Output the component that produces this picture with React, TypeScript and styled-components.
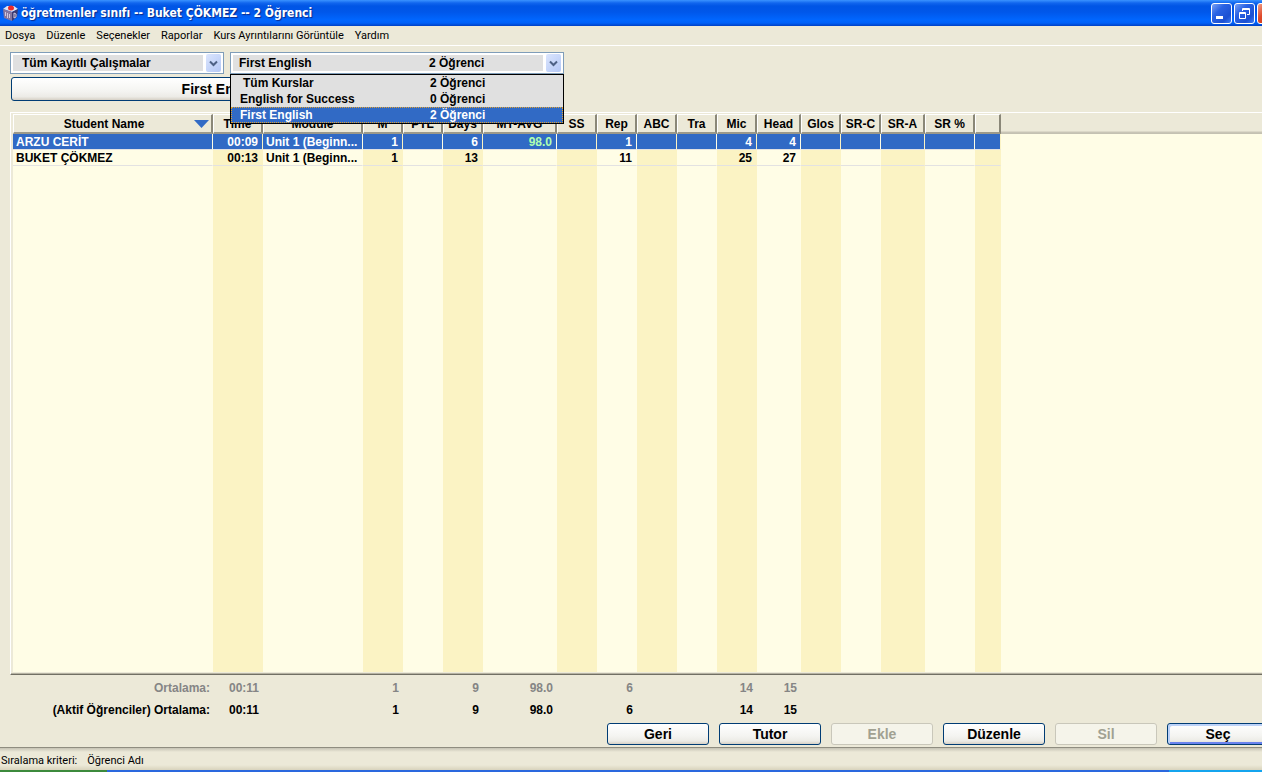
import React from 'react';
import styled, { createGlobalStyle, css } from 'styled-components';

const ui = '"Liberation Sans", Arial, sans-serif';
const menuFont = 'Roboto, Tahoma, sans-serif';

const GlobalStyle = createGlobalStyle`
  *, *::before, *::after { box-sizing: border-box; }
  body { margin: 0; background: #ece9d8; color: #000; font: bold 12px/16px ${ui}; }
`;

const Desktop = styled.div`
  display: flex;
  flex-direction: column;
  min-height: 100vh;
  overflow: hidden;
`;

/* The window is maximised on a desktop that is a little wider than the view. */
const Window = styled.div`
  flex: 1;
  display: flex;
  flex-direction: column;
  width: calc(100% + 18px);
  background: #ece9d8;
`;

const TitleBar = styled.header`
  display: flex;
  align-items: center;
  height: 26px;
  padding: 0 2px 0 2px;
  gap: 3px;
  background: linear-gradient(#3a93ff 0, #1166ee 3px, #0055e5 6px, #0057ea 12px, #0066ff 20px, #0061f8 23px, #0040c4 26px);
`;

const Title = styled.h1`
  flex: 1;
  margin: 0;
  font: bold 12px/20px "DejaVu Sans Condensed", "Trebuchet MS", sans-serif;
  color: #fff;
  text-shadow: 1px 1px 1px #0a2a8a;
  white-space: nowrap;
`;

const CaptionButton = styled.button<{ $close?: boolean }>`
  width: 21px;
  height: 21px;
  margin-left: -1px;
  padding: 0;
  border: 1px solid #fff;
  border-radius: 3px;
  background: ${p => p.$close
    ? 'linear-gradient(135deg, #f0a088, #e0492a 40%, #c33a14)'
    : 'linear-gradient(135deg, #7ba2f4, #2a63e4 35%, #1b50d2 75%, #3d7cf4)'};
  svg { display: block; }
`;

const MenuBar = styled.nav`
  display: flex;
  align-items: center;
  height: 20px;
  padding: 0 5px;
  gap: 11px;
  border-bottom: 1px solid #fff;
`;

const MenuItem = styled.button`
  padding: 0;
  border: 0;
  background: none;
  font: 11px/16px ${menuFont};
  color: #000;
  white-space: nowrap;
`;

const Content = styled.main`
  flex: 1;
  display: flex;
  flex-direction: column;
  padding: 6px 0 0 10px;
`;

const Filters = styled.div`
  display: flex;
  gap: 6px;
`;

const Combo = styled.div<{ $width: number }>`
  position: relative;
  display: flex;
  width: ${p => p.$width}px;
  height: 22px;
  padding: 2px;
  border: 1px solid #7f9db9;
  background: #fff;
`;

const Select = styled.select<{ $indent: number }>`
  flex: 1;
  min-width: 0;
  appearance: none;
  margin-right: 3px;
  padding: 0 0 0 ${p => p.$indent}px;
  border: 0;
  border-radius: 0;
  background: #e0e0e0;
  font: bold 12px/16px ${ui};
  color: #000;
`;

const Arrow = styled.span`
  display: flex;
  align-items: center;
  justify-content: center;
  width: 15px;
  height: 18px;
  margin-top: -1px;
  border-radius: 2px;
  background: linear-gradient(135deg, #dbe5fd, #b4c8f6);
  pointer-events: none;
`;

const Count = styled.span`
  position: absolute;
  left: 198px;
  top: 2px;
  pointer-events: none;
`;

const Popup = styled.ul`
  position: absolute;
  z-index: 2;
  left: -1px;
  right: -1px;
  top: 21px;
  margin: 0;
  padding: 0;
  list-style: none;
  border: 1px solid #000;
  background: #e0e0e0;
`;

const Option = styled.li<{ $active?: boolean; $indent: number }>`
  display: grid;
  grid-template-columns: 190px 1fr;
  height: 16px;
  padding-left: 9px;
  ${p => p.$active && css`
    background: #316ac5;
    color: #fff;
    outline: 1px dotted #e0a030;
    outline-offset: -1px;
  `}
  span:first-child { padding-left: ${p => p.$indent}px; }
`;

const Button = styled.button<{ $wide?: boolean; $default?: boolean }>`
  width: ${p => (p.$wide ? 426 : 102)}px;
  height: ${p => (p.$wide ? 24 : 22)}px;
  padding: 0;
  border: 1px solid #003c74;
  border-radius: 3px;
  background: linear-gradient(#fff, #f4f4f1 60%, #ecebe6 85%, #d6d0c5);
  font: bold 14px/18px ${ui};
  color: #000;
  ${p => p.$default && css`
    box-shadow: inset 2px 2px 0 #bcd2f8, inset -2px -2px 0 #6982ee;
  `}
  &:disabled {
    border-color: #c9c7ba;
    background: #f5f4ea;
    color: #a1a192;
  }
`;

const CourseButton = styled(Button)`
  margin: 3px 0 0 1px;
`;

const Frame = styled.section`
  flex: 1;
  display: flex;
  flex-direction: column;
  margin-top: 11px;
  padding: 1px 0 2px 2px;
  border: solid #fff;
  border-width: 1px 0 0 1px;
  border-bottom: 1px solid #716f64;
  box-shadow: inset 0 -1px 0 #b5b2a2;
`;

const Sheet = styled.div<{ $stripes: string }>`
  flex: 1;
  background:
    linear-gradient(#ece9d8 17px, #cbc7b8 18px, #c2bfb0) 0 0 / 100% 20px no-repeat,
    ${p => p.$stripes};
`;

const Table = styled.table<{ $width: number }>`
  width: ${p => p.$width}px;
  table-layout: fixed;
  border-collapse: separate;
  border-spacing: 0;
`;

const HeadCell = styled.th`
  height: 20px;
  padding: 2px 0 0;
  line-height: 15px;
  white-space: nowrap;
  text-align: center;
  background: #ece9d8;
  border: solid;
  border-width: 1px 2px 2px 1px;
  border-color: #fff #8a8778 #9c998a #fff;
  svg { float: right; margin: 3px 2px 0 0; }
`;

const Row = styled.tr<{ $selected?: boolean }>`
  td {
    height: 16px;
    padding: 1px 4px 0 3px;
    line-height: 14px;
    border-right: 1px solid transparent;
    border-bottom: 1px solid #e3e2e2;
    background-clip: padding-box;
    white-space: nowrap;
    ${p => p.$selected && css`
      background-color: #316ac5;
      color: #fff;
    `}
  }
`;

const Cell = styled.td<{ $left?: boolean; $green?: boolean }>`
  text-align: ${p => (p.$left ? 'left' : 'right')};
  ${p => p.$green && css`&& { color: #b0ffb0; }`}
`;

const Averages = styled(Table)`
  margin: 2px 0 0 3px;
  td, th {
    height: 22px;
    padding: 0 4px 0 0;
    text-align: right;
    white-space: nowrap;
  }
  th { padding-right: 3px; }
`;

const AverageRow = styled.tr<{ $muted?: boolean }>`
  color: ${p => (p.$muted ? '#858585' : '#000')};
`;

const Actions = styled.div`
  display: flex;
  justify-content: flex-end;
  gap: 10px;
  padding: 2px 11px 2px 0;
`;

const StatusBar = styled.footer`
  display: flex;
  align-items: center;
  height: 23px;
  padding: 3px 1px 0;
  gap: 10px;
  font: 11px/16px ${menuFont};
  border-top: 1px solid #8f8d80;
  background: linear-gradient(#c6c3b4, #ece9d8 4px, #ece9d8 17px, #d8d3bc);
`;

const TaskBar = styled.div`
  display: grid;
  grid-template-columns: 107px 1fr 93px;
  height: 2px;
`;

const TaskPart = styled.div<{ $color: string }>`
  background: ${p => p.$color};
`;

const columns: { label: string; width: number }[] = [
  { label: 'Student Name', width: 200 },
  { label: 'Time', width: 50 },
  { label: 'Module', width: 100 },
  { label: 'M', width: 40 },
  { label: 'PTL', width: 40 },
  { label: 'Days', width: 40 },
  { label: 'MT-AVG', width: 74 },
  { label: 'SS', width: 40 },
  { label: 'Rep', width: 40 },
  { label: 'ABC', width: 40 },
  { label: 'Tra', width: 40 },
  { label: 'Mic', width: 40 },
  { label: 'Head', width: 44 },
  { label: 'Glos', width: 40 },
  { label: 'SR-C', width: 40 },
  { label: 'SR-A', width: 44 },
  { label: 'SR %', width: 50 },
  { label: '', width: 26 },
];

const tableWidth = columns.reduce((sum, c) => sum + c.width, 0);

let edge = 0;
const stops = columns.map((c, i) => {
  const from = edge;
  edge += c.width;
  return `${i % 2 ? '#fbf3c4' : '#fffde6'} ${from}px ${edge}px`;
});
const stripes = `linear-gradient(90deg, ${stops.join(', ')}, #fffde6 ${edge}px)`;

const students = [
  ['ARZU CERİT', '00:09', 'Unit 1 (Beginn...', '1', '', '6', '98.0', '', '1', '', '', '4', '4', '', '', '', '', ''],
  ['BUKET ÇÖKMEZ', '00:13', 'Unit 1 (Beginn...', '1', '', '13', '', '', '11', '', '', '25', '27', '', '', '', '', ''],
];

const averages = ['00:11', '', '1', '', '9', '98.0', '', '6', '', '', '14', '15', '', '', '', '', ''];

const courses = [
  { name: 'Tüm Kurslar', count: '2 Öğrenci', indent: 3 },
  { name: 'English for Success', count: '0 Öğrenci', indent: 0 },
  { name: 'First English', count: '2 Öğrenci', indent: 0 },
];

const Columns = () => (
  <colgroup>
    {columns.map((c, i) => <col key={i} style={{ width: c.width }} />)}
  </colgroup>
);

const AppIcon = () => (
  <svg width="16" height="18" viewBox="0 0 16 18" aria-hidden="true">
    <path d="M1 5 5 2h7l4 3-6 3z" fill="#dfe3f2" />
    <path d="M1 5l9 3v9l-8-3z" fill="#85769f" />
    <path d="M16 5l-6 3v9l5-4z" fill="#3b3a72" />
    <path d="M3.500 8v4M5.500 9v5M7.500 10v4M12 14V9l2 1v3l-2 1" stroke="#cfc8e0" fill="none" />
    <ellipse cx="9" cy="4" rx="3" ry="2.500" fill="#ee2a2a" />
  </svg>
);

const Chevron = () => (
  <svg width="9" height="7" viewBox="0 0 9 7" aria-hidden="true">
    <path d="M1 1.500 4.500 5 8 1.500" fill="none" stroke="#4d6185" strokeWidth="2" />
  </svg>
);

export default function App() {
  return (
    <Desktop>
      <GlobalStyle />
      <Window>
        <TitleBar>
          <AppIcon />
          <Title>öğretmenler sınıfı -- Buket ÇÖKMEZ -- 2 Öğrenci</Title>
          <CaptionButton aria-label="Simge durumuna küçült">
            <svg width="19" height="19" viewBox="0 0 19 19"><path d="M4 12h7v3H4z" fill="#fff" /></svg>
          </CaptionButton>
          <CaptionButton aria-label="Önceki boyut">
            <svg width="19" height="19" viewBox="0 0 19 19" fill="none" stroke="#fff">
              <path d="M7.500 7V4.500h7v6H12M7 5.500h8M4.500 8.500h6v6h-6zM4 9.500h7" />
            </svg>
          </CaptionButton>
          <CaptionButton $close aria-label="Kapat">
            <svg width="19" height="19" viewBox="0 0 19 19"><path d="m5 5 9 9m0-9-9 9" stroke="#fff" strokeWidth="2" /></svg>
          </CaptionButton>
        </TitleBar>
        <MenuBar>
          {['Dosya', 'Düzenle', 'Seçenekler', 'Raporlar', 'Kurs Ayrıntılarını Görüntüle', 'Yardım'].map(m => (
            <MenuItem key={m}>{m}</MenuItem>
          ))}
        </MenuBar>
        <Content>
          <Filters>
            <Combo $width={214}>
              <Select $indent={9} aria-label="Çalışmalar">
                <option>Tüm Kayıtlı Çalışmalar</option>
              </Select>
              <Arrow><Chevron /></Arrow>
            </Combo>
            <Combo $width={334}>
              <Select $indent={6} aria-label="Kurs" defaultValue="First English">
                {courses.map(c => <option key={c.name}>{c.name}</option>)}
              </Select>
              <Count>2 Öğrenci</Count>
              <Arrow><Chevron /></Arrow>
              <Popup role="listbox" aria-label="Kurslar">
                {courses.map((c, i) => (
                  <Option key={c.name} role="option" aria-selected={i === 2} $active={i === 2} $indent={c.indent}>
                    <span>{c.name}</span>
                    <span>{c.count}</span>
                  </Option>
                ))}
              </Popup>
            </Combo>
          </Filters>
          <CourseButton $wide>First English</CourseButton>
          <Frame>
            <Sheet $stripes={stripes}>
              <Table $width={tableWidth}>
                <Columns />
                <thead>
                  <tr>
                    {columns.map((c, i) => (
                      <HeadCell key={i} scope="col">
                        {i === 0 && (
                          <svg width="15" height="8" viewBox="0 0 15 8" aria-hidden="true"><path d="M0 0h15L7.500 8z" fill="#316ac5" /></svg>
                        )}
                        {c.label}
                      </HeadCell>
                    ))}
                  </tr>
                </thead>
                <tbody>
                  {students.map((s, r) => (
                    <Row key={s[0]} $selected={r === 0}>
                      {s.map((v, i) => (
                        <Cell key={i} $left={i === 0 || i === 2} $green={i === 6}>{v}</Cell>
                      ))}
                    </Row>
                  ))}
                </tbody>
              </Table>
            </Sheet>
          </Frame>
          <Averages $width={tableWidth}>
            <Columns />
            <tbody>
              {['Ortalama:', '(Aktif Öğrenciler) Ortalama:'].map((label, r) => (
                <AverageRow key={label} $muted={r === 0}>
                  <th scope="row">{label}</th>
                  {averages.map((v, i) => <td key={i}>{v}</td>)}
                </AverageRow>
              ))}
            </tbody>
          </Averages>
          <Actions>
            <Button>Geri</Button>
            <Button>Tutor</Button>
            <Button disabled>Ekle</Button>
            <Button>Düzenle</Button>
            <Button disabled>Sil</Button>
            <Button $default>Seç</Button>
          </Actions>
        </Content>
        <StatusBar>
          <span>Sıralama kriteri:</span>
          <span>Öğrenci Adı</span>
        </StatusBar>
      </Window>
      <TaskBar>
        <TaskPart $color="#3c8a3c" />
        <TaskPart $color="#2a68de" />
        <TaskPart $color="#14a4ee" />
      </TaskBar>
    </Desktop>
  );
}
